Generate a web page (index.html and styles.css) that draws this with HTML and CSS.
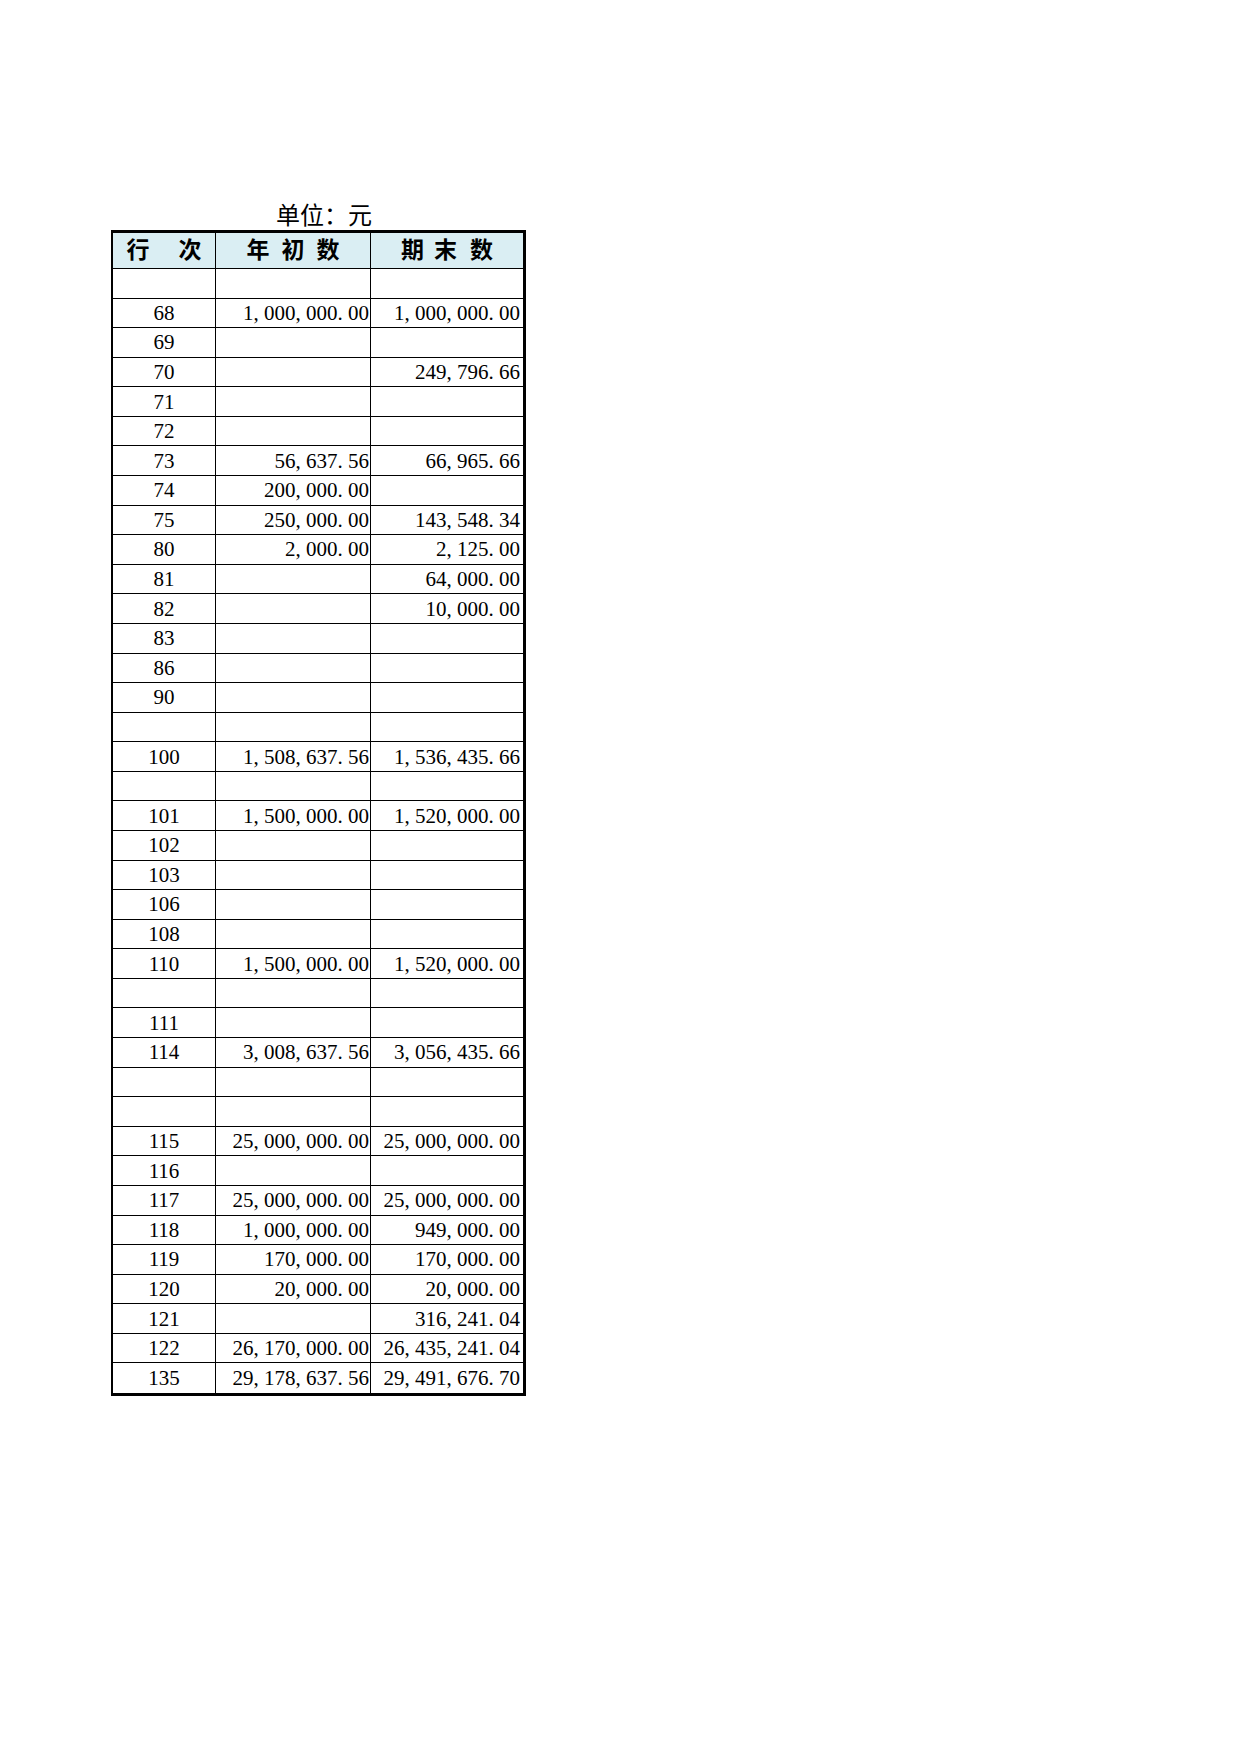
FILE: index.html
```html
<!DOCTYPE html>
<html lang="zh-CN">
<head>
<meta charset="utf-8">
<title>单位：元</title>
<link rel="stylesheet" href="styles.css">
</head>
<body>
<div class="page">
  <div class="unit">单位：元</div>
  <table class="sheet">
    <colgroup><col class="w1"><col class="w2"><col class="w3"></colgroup>
    <thead>
      <tr>
        <th><div class="hd hd-a"><span>行</span><span>次</span></div></th>
        <th><div class="hd hd-b"><span>年</span><span>初</span><span>数</span></div></th>
        <th><div class="hd hd-c"><span>期</span><span class="g2">末</span><span>数</span></div></th>
      </tr>
    </thead>
    <tbody>
      <tr><td class="idx"></td><td class="n2"></td><td class="n3"></td></tr>
      <tr><td class="idx">68</td><td class="n2">1<span class="p">,</span>000<span class="p">,</span>000<span class="p">.</span>00</td><td class="n3">1<span class="p">,</span>000<span class="p">,</span>000<span class="p">.</span>00</td></tr>
      <tr><td class="idx">69</td><td class="n2"></td><td class="n3"></td></tr>
      <tr><td class="idx">70</td><td class="n2"></td><td class="n3">249<span class="p">,</span>796<span class="p">.</span>66</td></tr>
      <tr><td class="idx">71</td><td class="n2"></td><td class="n3"></td></tr>
      <tr><td class="idx">72</td><td class="n2"></td><td class="n3"></td></tr>
      <tr><td class="idx">73</td><td class="n2">56<span class="p">,</span>637<span class="p">.</span>56</td><td class="n3">66<span class="p">,</span>965<span class="p">.</span>66</td></tr>
      <tr><td class="idx">74</td><td class="n2">200<span class="p">,</span>000<span class="p">.</span>00</td><td class="n3"></td></tr>
      <tr><td class="idx">75</td><td class="n2">250<span class="p">,</span>000<span class="p">.</span>00</td><td class="n3">143<span class="p">,</span>548<span class="p">.</span>34</td></tr>
      <tr><td class="idx">80</td><td class="n2">2<span class="p">,</span>000<span class="p">.</span>00</td><td class="n3">2<span class="p">,</span>125<span class="p">.</span>00</td></tr>
      <tr><td class="idx">81</td><td class="n2"></td><td class="n3">64<span class="p">,</span>000<span class="p">.</span>00</td></tr>
      <tr><td class="idx">82</td><td class="n2"></td><td class="n3">10<span class="p">,</span>000<span class="p">.</span>00</td></tr>
      <tr><td class="idx">83</td><td class="n2"></td><td class="n3"></td></tr>
      <tr><td class="idx">86</td><td class="n2"></td><td class="n3"></td></tr>
      <tr><td class="idx">90</td><td class="n2"></td><td class="n3"></td></tr>
      <tr><td class="idx"></td><td class="n2"></td><td class="n3"></td></tr>
      <tr><td class="idx">100</td><td class="n2">1<span class="p">,</span>508<span class="p">,</span>637<span class="p">.</span>56</td><td class="n3">1<span class="p">,</span>536<span class="p">,</span>435<span class="p">.</span>66</td></tr>
      <tr><td class="idx"></td><td class="n2"></td><td class="n3"></td></tr>
      <tr><td class="idx">101</td><td class="n2">1<span class="p">,</span>500<span class="p">,</span>000<span class="p">.</span>00</td><td class="n3">1<span class="p">,</span>520<span class="p">,</span>000<span class="p">.</span>00</td></tr>
      <tr><td class="idx">102</td><td class="n2"></td><td class="n3"></td></tr>
      <tr><td class="idx">103</td><td class="n2"></td><td class="n3"></td></tr>
      <tr><td class="idx">106</td><td class="n2"></td><td class="n3"></td></tr>
      <tr><td class="idx">108</td><td class="n2"></td><td class="n3"></td></tr>
      <tr><td class="idx">110</td><td class="n2">1<span class="p">,</span>500<span class="p">,</span>000<span class="p">.</span>00</td><td class="n3">1<span class="p">,</span>520<span class="p">,</span>000<span class="p">.</span>00</td></tr>
      <tr><td class="idx"></td><td class="n2"></td><td class="n3"></td></tr>
      <tr><td class="idx">111</td><td class="n2"></td><td class="n3"></td></tr>
      <tr><td class="idx">114</td><td class="n2">3<span class="p">,</span>008<span class="p">,</span>637<span class="p">.</span>56</td><td class="n3">3<span class="p">,</span>056<span class="p">,</span>435<span class="p">.</span>66</td></tr>
      <tr><td class="idx"></td><td class="n2"></td><td class="n3"></td></tr>
      <tr><td class="idx"></td><td class="n2"></td><td class="n3"></td></tr>
      <tr><td class="idx">115</td><td class="n2">25<span class="p">,</span>000<span class="p">,</span>000<span class="p">.</span>00</td><td class="n3">25<span class="p">,</span>000<span class="p">,</span>000<span class="p">.</span>00</td></tr>
      <tr><td class="idx">116</td><td class="n2"></td><td class="n3"></td></tr>
      <tr><td class="idx">117</td><td class="n2">25<span class="p">,</span>000<span class="p">,</span>000<span class="p">.</span>00</td><td class="n3">25<span class="p">,</span>000<span class="p">,</span>000<span class="p">.</span>00</td></tr>
      <tr><td class="idx">118</td><td class="n2">1<span class="p">,</span>000<span class="p">,</span>000<span class="p">.</span>00</td><td class="n3">949<span class="p">,</span>000<span class="p">.</span>00</td></tr>
      <tr><td class="idx">119</td><td class="n2">170<span class="p">,</span>000<span class="p">.</span>00</td><td class="n3">170<span class="p">,</span>000<span class="p">.</span>00</td></tr>
      <tr><td class="idx">120</td><td class="n2">20<span class="p">,</span>000<span class="p">.</span>00</td><td class="n3">20<span class="p">,</span>000<span class="p">.</span>00</td></tr>
      <tr><td class="idx">121</td><td class="n2"></td><td class="n3">316<span class="p">,</span>241<span class="p">.</span>04</td></tr>
      <tr><td class="idx">122</td><td class="n2">26<span class="p">,</span>170<span class="p">,</span>000<span class="p">.</span>00</td><td class="n3">26<span class="p">,</span>435<span class="p">,</span>241<span class="p">.</span>04</td></tr>
      <tr><td class="idx">135</td><td class="n2">29<span class="p">,</span>178<span class="p">,</span>637<span class="p">.</span>56</td><td class="n3">29<span class="p">,</span>491<span class="p">,</span>676<span class="p">.</span>70</td></tr>
    </tbody>
  </table>
</div>
</body>
</html>
```

FILE: styles.css
```css
html, body {
  margin: 0;
  padding: 0;
  background: #ffffff;
  color: #000000;
}

.page {
  padding: 202px 0 0 111px;
}

.unit {
  margin: 0 0 4px 165px;
  height: 24px;
  font-family: "Noto Sans CJK SC", sans-serif;
  font-weight: 400;
  font-size: 24px;
  line-height: 24px;
  white-space: nowrap;
}

.sheet {
  box-sizing: border-box;
  width: 415px;
  table-layout: fixed;
  border-collapse: separate;
  border-spacing: 0;
  border-top: 3px solid #000;
  border-left: 2px solid #000;
  border-right: 3px solid #000;
  border-bottom: 3px solid #000;
  font-family: "Liberation Serif", "Noto Sans CJK SC", serif;
  font-size: 21px;
}

.w1 { width: 103px; }
.w2 { width: 155px; }
.w3 { width: 152px; }

.sheet th,
.sheet td {
  box-sizing: border-box;
  padding: 0;
  border-right: 1px solid #000;
  border-bottom: 1px solid #000;
  white-space: nowrap;
}

.sheet th:last-child,
.sheet td:last-child {
  border-right: 0;
}

.sheet tbody tr:last-child td {
  border-bottom: 0;
}

.sheet th {
  height: 36px;
  background: #daeef3;
  font-family: "Noto Sans CJK SC", sans-serif;
  font-weight: 700;
  font-size: 23px;
  line-height: 1;
}

.hd {
  box-sizing: border-box;
  display: flex;
  justify-content: center;
  align-items: center;
  height: 35px;
  padding-bottom: 4px;
}

.hd-a { gap: 29px; }
.hd-b { gap: 12px; }
.hd-c { gap: 10px; }
.hd-c .g2 { margin-right: 3px; }

.sheet td {
  height: 29.58px;
  padding-top: 1px;
  vertical-align: middle;
  line-height: normal;
}

.idx {
  text-align: center;
  padding-right: 3px;
}

.sheet td.n2 {
  text-align: right;
  padding-right: 1px;
}

.sheet td.n3 {
  text-align: right;
  padding-right: 3px;
}

.p {
  display: inline-block;
  width: 0.5em;
  text-align: left;
}
```
